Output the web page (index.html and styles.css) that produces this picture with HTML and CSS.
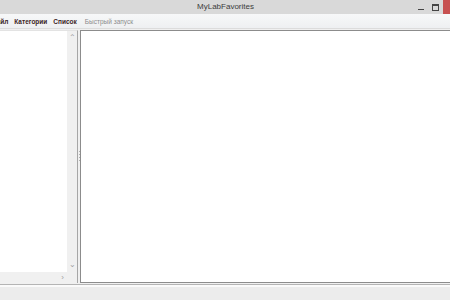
FILE: index.html
```html
<!DOCTYPE html>
<html lang="ru">
<head>
  <meta charset="UTF-8" />
  <title>MyLabFavorites</title>
  <link rel="stylesheet" href="styles.css">
</head>
<body>
  <div class="window">
    <header class="titlebar">
      <span class="title">MyLabFavorites</span>
      <div class="win-controls">
        <span class="btn-min"></span>
        <span class="btn-max"></span>
        <span class="btn-close"></span>
      </div>
    </header>

    <nav class="menubar">
      <span class="menu-item first">Файл</span>
      <span class="menu-item">Категории</span>
      <span class="menu-item">Список</span>
      <span class="menu-item disabled">Быстрый запуск</span>
    </nav>

    <main class="content">
      <section class="left-panel">
        <div class="list-area">
          <div class="list-body"></div>
          <div class="vscroll">
            <span class="arrow up">&#8963;</span>
            <span class="arrow down">&#8964;</span>
          </div>
        </div>
        <div class="hscroll">
          <div class="htrack">
            <span class="arrow right">&#8250;</span>
          </div>
          <div class="corner"></div>
        </div>
      </section>
      <div class="splitter">
        <span class="grip"></span>
      </div>
      <section class="right-panel"></section>
    </main>

    <footer class="statusbar"></footer>
  </div>
</body>
</html>
```

FILE: styles.css
```css
html, body {
  margin: 0;
  height: 100%;
  overflow: hidden;
}
body {
  font-family: 'Liberation Sans', Arial, sans-serif;
  background: #f0f0f0;
}
.window {
  display: flex;
  flex-direction: column;
  height: 300px;
  width: 450px;
}
.titlebar {
  position: relative;
  height: 14px;
  background: #d9d9d9;
  display: flex;
  justify-content: center;
  align-items: center;
}
.title {
  font-size: 8px;
  color: #3c3c3c;
  line-height: 14px;
  margin-left: 1px;
}
.win-controls {
  position: absolute;
  top: 0;
  right: 0;
  height: 14px;
  display: flex;
  align-items: center;
}
.btn-min {
  width: 6px;
  height: 1px;
  background: #444;
  margin-top: 4px;
  margin-right: 8px;
}
.btn-max {
  width: 5px;
  height: 4px;
  border: 1px solid #444;
  border-top-width: 2px;
  margin-right: 4px;
}
.btn-close {
  width: 7px;
  height: 14px;
  background: #c75050;
}
.menubar {
  height: 14px;
  background: linear-gradient(#f7f8f9, #eef0f2);
  border-bottom: 1px solid #dcdcdc;
  display: flex;
  align-items: center;
  gap: 6px;
  font-size: 6.5px;
  overflow: hidden;
}
.menu-item {
  font-weight: bold;
  color: #3b2424;
  white-space: nowrap;
}
.menu-item.first {
  margin-left: -9px;
}
.menu-item.disabled {
  font-weight: normal;
  color: #8d8d8d;
  margin-left: 2px;
}
.content {
  flex: 1;
  display: flex;
  padding-top: 1px;
  background: #f0f0f0;
}
.left-panel {
  width: 77px;
  display: flex;
  flex-direction: column;
  border-right: 1px solid #a6a6a6;
  border-top: 1px solid #e3e3e3;
  background: #fff;
}
.list-area {
  flex: 1;
  display: flex;
}
.list-body {
  flex: 1;
  background: #fff;
}
.vscroll {
  width: 10px;
  background: #f0f0f0;
  display: flex;
  flex-direction: column;
  justify-content: space-between;
  align-items: center;
}
.arrow {
  font-size: 8px;
  line-height: 10px;
  color: #a0a0a0;
}
.arrow.up {
  margin-top: 2px;
}
.arrow.down {
  margin-bottom: 2px;
}
.hscroll {
  height: 11px;
  display: flex;
}
.htrack {
  flex: 1;
  background: #f0f0f0;
  display: flex;
  justify-content: flex-end;
  align-items: center;
  padding-right: 3px;
}
.corner {
  width: 10px;
  background: #f0f0f0;
}
.splitter {
  width: 2px;
  display: flex;
  align-items: center;
  justify-content: center;
  background: #f0f0f0;
}
.grip {
  width: 1px;
  height: 12px;
  background: repeating-linear-gradient(#b0b0b0 0 1px, transparent 1px 3px);
}
.right-panel {
  flex: 1;
  background: #fff;
  border: 1px solid #8c8c8c;
  border-right: none;
}
.statusbar {
  height: 15px;
  margin-top: 1px;
  border-top: 1px solid #b4b4b4;
  background: linear-gradient(#fafafa 0 2px, #ececec 2px);
}
```
